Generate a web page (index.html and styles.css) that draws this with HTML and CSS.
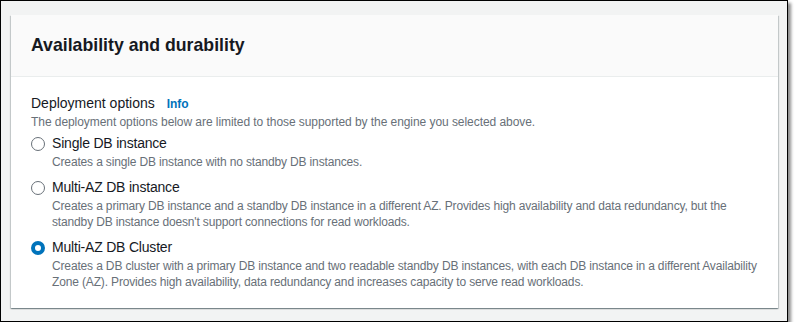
FILE: index.html
```html
<!DOCTYPE html>
<html lang="en">
<head>
    <meta charset="UTF-8">
    <meta name="viewport" content="width=device-width, initial-scale=1.0">
    <title>Availability and durability</title>
    <link rel="stylesheet" href="styles.css">
</head>
<body>
    <div class="frame">
        <div class="card">
            <div class="card-header">
                <h2>Availability and durability</h2>
            </div>
            <div class="card-body">
                <div class="field-label">Deployment options <a class="info" href="#">Info</a></div>
                <div class="field-desc">The deployment options below are limited to those supported by the engine you selected above.</div>

                <label class="radio-item">
                    <span class="radio"></span>
                    <span class="radio-text">
                        <span class="radio-label">Single DB instance</span>
                        <span class="radio-desc">Creates a single DB instance with no standby DB instances.</span>
                    </span>
                </label>

                <label class="radio-item">
                    <span class="radio"></span>
                    <span class="radio-text">
                        <span class="radio-label">Multi-AZ DB instance</span>
                        <span class="radio-desc">Creates a primary DB instance and a standby DB instance in a different AZ. Provides high availability and data redundancy, but the standby DB instance doesn't support connections for read workloads.</span>
                    </span>
                </label>

                <label class="radio-item">
                    <span class="radio checked"></span>
                    <span class="radio-text">
                        <span class="radio-label">Multi-AZ DB Cluster</span>
                        <span class="radio-desc">Creates a DB cluster with a primary DB instance and two readable standby DB instances, with each DB instance in a different Availability Zone (AZ). Provides high availability, data redundancy and increases capacity to serve read workloads.</span>
                    </span>
                </label>
            </div>
        </div>
    </div>
</body>
</html>
```

FILE: styles.css
```css
body {
    margin: 0;
    background-color: #fff;
    font-family: 'Liberation Sans', Arial, sans-serif;
    color: #16191f;
}
.frame {
    width: 788px;
    height: 322px;
    box-sizing: border-box;
    border: 1px solid #000;
    background-color: #f2f3f3;
    padding: 14px 9px 0 10px;
    box-shadow: 3px 3px 3px rgba(0, 0, 0, 0.45);
}
.card {
    background-color: #fff;
    box-shadow: 0 1px 1px 0 rgba(0, 28, 36, 0.3), 1px 1px 1px 0 rgba(0, 28, 36, 0.15), -1px 1px 1px 0 rgba(0, 28, 36, 0.15);
}
.card-header {
    background-color: #fafafa;
    border-bottom: 1px solid #eaeded;
    padding: 19px 20px 20px;
}
h2 {
    margin: 0;
    font-size: 17.7px;
    line-height: 22px;
    font-weight: bold;
}
.card-body {
    padding: 16px 8px 18px 20px;
}
.field-label {
    font-size: 14px;
    line-height: 20px;
}
.info {
    margin-left: 8px;
    font-size: 12px;
    font-weight: bold;
    color: #0073bb;
    text-decoration: none;
}
.field-desc {
    font-size: 12px;
    line-height: 16px;
    letter-spacing: -0.06px;
    color: #687078;
}
.radio-item {
    display: flex;
    align-items: flex-start;
    gap: 7px;
    margin-top: 7px;
}
.field-desc + .radio-item {
    margin-top: 3px;
}
.radio {
    flex: none;
    width: 14px;
    height: 14px;
    box-sizing: border-box;
    border: 1.5px solid #687078;
    border-radius: 50%;
    margin-top: 4px;
}
.radio.checked {
    border: 4px solid #0073bb;
}
.radio-text {
    display: flex;
    flex-direction: column;
}
.radio-label {
    font-size: 14px;
    line-height: 22px;
    letter-spacing: -0.2px;
    margin-top: -1px;
}
.radio-desc {
    font-size: 12px;
    line-height: 16px;
    letter-spacing: -0.15px;
    color: #687078;
}
```
